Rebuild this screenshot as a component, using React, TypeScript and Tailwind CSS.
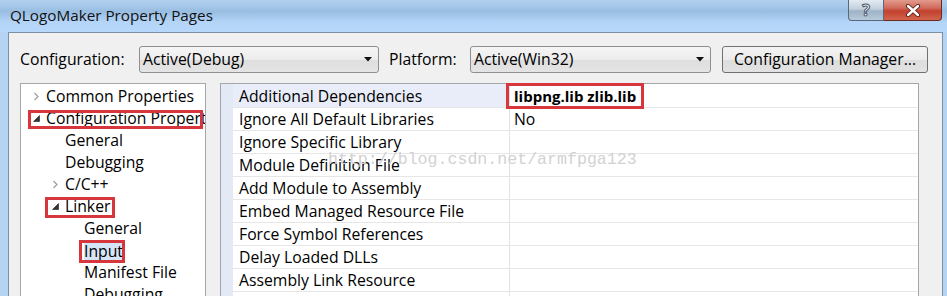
import React from 'react';

type TreeItem = {
  label: string;
  level: number;
  toggle?: 'open' | 'closed';
  selected?: boolean;
  // 红框标注（相对当前行）
  box?: { left: number; width: number; top: number; height: number };
};

const treeItems: TreeItem[] = [
  { label: 'Common Properties', level: 0, toggle: 'closed' },
  { label: 'Configuration Properties', level: 0, toggle: 'open', box: { left: 7, width: 175, top: 3, height: 19 } },
  { label: 'General', level: 1 },
  { label: 'Debugging', level: 1 },
  { label: 'C/C++', level: 1, toggle: 'closed' },
  { label: 'Linker', level: 1, toggle: 'open', box: { left: 24, width: 70, top: 2, height: 21 } },
  { label: 'General', level: 2 },
  { label: 'Input', level: 2, selected: true, box: { left: 58, width: 46, top: 1, height: 23 } },
  { label: 'Manifest File', level: 2 },
  { label: 'Debugging', level: 2 },
];

const indentClass = ['pl-[12px]', 'pl-[31px]', 'pl-[50px]'];

const properties: { name: string; value?: string; bold?: boolean }[] = [
  { name: 'Additional Dependencies', value: 'libpng.lib zlib.lib', bold: true },
  { name: 'Ignore All Default Libraries', value: 'No' },
  { name: 'Ignore Specific Library' },
  { name: 'Module Definition File' },
  { name: 'Add Module to Assembly' },
  { name: 'Embed Managed Resource File' },
  { name: 'Force Symbol References' },
  { name: 'Delay Loaded DLLs' },
  { name: 'Assembly Link Resource' },
  { name: '' },
];

const ui = "font-['Open_Sans','Noto_Sans',sans-serif]";

const DropArrow = () => (
  <svg width="8" height="5" viewBox="0 0 8 5">
    <polygon points="0,0 8,0 4,4.5" fill="#111" />
  </svg>
);

const Combo = ({ text, width }: { text: string; width: string }) => (
  <div
    className={`${width} h-[27px] flex items-center justify-between pl-[3px] pr-[6px] rounded-[3px] border border-[#8e8f8f] bg-[linear-gradient(to_bottom,#f5f5f5_0%,#ececec_50%,#dedede_51%,#e4e4e4_100%)] text-black`}
  >
    <span className="pt-[1px]">{text}</span>
    <DropArrow />
  </div>
);

const TreeGlyph = ({ toggle }: { toggle?: 'open' | 'closed' }) => (
  <span className="w-[13px] h-full flex items-center shrink-0">
    {toggle === 'closed' && (
      <svg width="6" height="9" viewBox="0 0 6 9">
        <path d="M1.5 1 L5 4.5 L1.5 8" fill="none" stroke="#9a9a9a" strokeWidth="1.1" />
      </svg>
    )}
    {toggle === 'open' && (
      <svg width="7" height="7" viewBox="0 0 7 7">
        <polygon points="6.5,0.5 6.5,6.5 0.5,6.5" fill="#333" stroke="#222" strokeWidth="0.6" />
      </svg>
    )}
  </span>
);

export default function App() {
  return (
    <div className={`w-[947px] h-[296px] overflow-hidden flex flex-col bg-[#b5d4f4] text-[15.75px] ${ui}`}>
      {/* 标题栏 */}
      <div className="h-[32px] shrink-0 flex items-start bg-[linear-gradient(to_bottom,#b1cfee_0%,#a9c9ea_18%,#97bde0_35%,#a5c8ec_52%,#b4d5f8_70%,#b8d8fb_100%)]">
        <span className="pl-[10px] pt-[4px] text-[15.25px] text-[#111]">QLogoMaker Property Pages</span>
        <div className="ml-auto mr-[5px] flex h-[21px]">
          <div className="w-[36px] h-full flex items-center justify-center rounded-bl-[4px] border border-t-0 border-[#56697e] bg-[linear-gradient(to_bottom,#e3eaf2_0%,#c3d0dd_45%,#9fb3c7_55%,#b7c9da_100%)]">
            <span className="text-[16px] leading-none font-bold text-white [-webkit-text-stroke:1px_#45566a]">?</span>
          </div>
          <div className="w-[58px] h-full flex items-center justify-center rounded-br-[4px] border border-t-0 border-l-0 border-[#6c2a22] bg-[linear-gradient(to_bottom,#e29b8e_0%,#d06a5a_40%,#c2412e_55%,#d2654c_100%)]">
            <svg width="16" height="13" viewBox="0 0 16 13">
              <path d="M3 2 L13 11 M13 2 L3 11" stroke="#5a2019" strokeWidth="4.2" strokeLinecap="round" />
              <path d="M3 2 L13 11 M13 2 L3 11" stroke="#fff" strokeWidth="2.4" strokeLinecap="round" />
            </svg>
          </div>
        </div>
      </div>

      {/* 窗口主体 */}
      <div className="flex-1 flex pl-[8px] pr-[4px] min-h-0">
        <div className="flex-1 flex flex-col bg-[#f0f0f0] border-l border-t border-r border-[#7d8fa3] min-h-0">
          {/* 配置工具栏 */}
          <div className="mt-[13px] pl-[11px] h-[27px] flex items-center text-black shrink-0">
            <span className="w-[119px] pt-[1px]">Configuration:</span>
            <Combo text="Active(Debug)" width="w-[240px]" />
            <span className="ml-[10px] w-[81px] pt-[1px]">Platform:</span>
            <Combo text="Active(Win32)" width="w-[241px]" />
            <div className="ml-[11px] w-[206px] h-[27px] pt-[1px] flex items-center justify-center rounded-[3px] border border-[#707070] bg-[linear-gradient(to_bottom,#f4f4f4_0%,#ebebeb_50%,#dddddd_51%,#e2e2e2_100%)]">
              Configuration Manager...
            </div>
          </div>

          <div className="mt-[10px] pl-[11px] flex flex-1 min-h-0">
            {/* 左侧树 */}
            <div className="w-[186px] h-full shrink-0 bg-white border border-b-0 border-[#a3a6ab] pt-[1px] overflow-hidden text-black">
              {treeItems.map((item, i) => (
                <div key={i} className={`relative h-[22px] flex items-center whitespace-nowrap ${indentClass[item.level]}`}>
                  <TreeGlyph toggle={item.toggle} />
                  <span className={`pt-[2px] ${item.selected ? 'bg-[#d6e5f6] pb-[1px] leading-[18px]' : ''}`}>{item.label}</span>
                  {item.box && (
                    <span
                      className="absolute border-[3px] border-[#d7363c] pointer-events-none"
                      style={{ left: item.box.left, width: item.box.width, top: item.box.top, height: item.box.height }}
                    />
                  )}
                </div>
              ))}
            </div>

            {/* 右侧属性表 */}
            <div className="relative ml-[14px] w-[699px] h-full flex bg-white border border-b-0 border-[#a3a6ab] text-black">
              <div className="w-[12px] h-full bg-[#e4e9f6] shrink-0" />
              <div className="flex-1 flex flex-col">
                {properties.map((p, i) => (
                  <div key={i} className={`${i === 0 ? 'h-[24px]' : 'h-[23px]'} flex border-b border-[#e6e6e6] shrink-0`}>
                    <div className={`w-[277px] pl-[6px] pt-[2px] flex items-center border-r border-[#e2e2e2] ${i === 0 ? 'bg-[#e9edf9]' : ''}`}>
                      {p.name}
                    </div>
                    <div className={`flex-1 pl-[4px] pt-[2px] flex items-center ${p.bold ? 'font-bold text-[15px]' : ''}`}>{p.value}</div>
                  </div>
                ))}
              </div>

              {/* 水印 */}
              <span className="absolute left-[107px] top-[64px] text-[16.6px] font-['Liberation_Mono',monospace] text-[#d2d2d2] pointer-events-none whitespace-nowrap">
                http://blog.csdn.net/armfpga123
              </span>

              {/* 标注红框 */}
              <span className="absolute left-[285px] top-[-1px] w-[138px] h-[26px] border-[3px] border-[#d7363c] pointer-events-none" />
            </div>
          </div>
        </div>
      </div>
    </div>
  );
}
